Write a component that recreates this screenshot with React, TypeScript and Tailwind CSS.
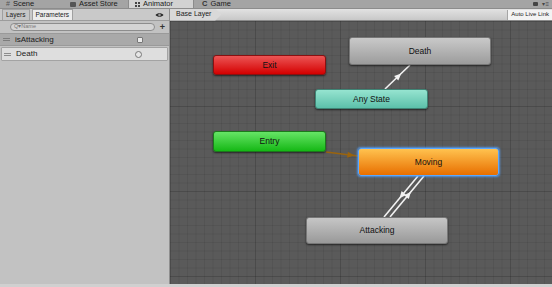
import React from "react";

type Pt = [number, number];

interface NodeProps {
  label: string;
  left: number;
  top: number;
  w: number;
  h: number;
  tone: string;
}

function GraphNode({ label, left, top, w, h, tone }: NodeProps) {
  return (
    <div
      className={`absolute flex items-center justify-center rounded-[3px] text-[8.5px] text-[#111] ${tone}`}
      style={{ left, top, width: w, height: h }}
    >
      {label}
    </div>
  );
}

// triangle pointing from a to b, centred at fraction t along the segment
function head(a: Pt, b: Pt, t: number, len = 7, half = 3) {
  const dx = b[0] - a[0];
  const dy = b[1] - a[1];
  const d = Math.hypot(dx, dy);
  const ux = dx / d;
  const uy = dy / d;
  const cx = a[0] + dx * t;
  const cy = a[1] + dy * t;
  const tip: Pt = [cx + (ux * len) / 2, cy + (uy * len) / 2];
  const bx = cx - (ux * len) / 2;
  const by = cy - (uy * len) / 2;
  const p1: Pt = [bx - uy * half, by + ux * half];
  const p2: Pt = [bx + uy * half, by - ux * half];
  return [tip, p1, p2].map((p) => p.join(",")).join(" ");
}

const transitions: { a: Pt; b: Pt; t: number; color: string }[] = [
  { a: [215, 68], b: [240, 44], t: 0.55, color: "#f2f2f2" },
  { a: [156, 131], b: [188, 135], t: 0.78, color: "#9a640e" },
  { a: [248, 155], b: [214, 196], t: 0.48, color: "#f2f2f2" },
  { a: [220, 196], b: [254, 155], t: 0.55, color: "#f2f2f2" },
];

function Eye() {
  return (
    <svg width="9" height="6" viewBox="0 0 9 6">
      <path d="M0.5 3C2 0.6 7 0.6 8.5 3C7 5.4 2 5.4 0.5 3Z" fill="#2a2a2a" />
      <circle cx="4.5" cy="3" r="1.3" fill="#9a9a9a" />
    </svg>
  );
}

export default function App() {
  return (
    <div className="w-[552px] h-[287px] flex flex-col overflow-hidden bg-[#c9c9c9] font-['Liberation_Sans',Arial,sans-serif] text-[#1b1b1b]">
      {/* window tabs */}
      <div className="h-[9px] flex items-stretch overflow-hidden bg-[#a4a4a4] border-b border-[#8c8c8c] text-[7.5px] leading-[8px]">
        <div className="flex items-center gap-[3px] w-[66px] pl-[6px]">
          <span className="text-[#555] text-[7px]">#</span>Scene
        </div>
        <div className="flex items-center gap-[3px] w-[62px] pl-[4px]">
          <span className="w-[6px] h-[5px] bg-[#555] rounded-[1px]" />Asset Store
        </div>
        <div className="flex items-center gap-[3px] w-[66px] pl-[6px] bg-[#d2d2d2] border-x border-[#8c8c8c]">
          <span className="grid grid-cols-2 gap-[1px]">
            <span className="w-[2px] h-[2px] bg-[#444]" />
            <span className="w-[2px] h-[2px] bg-[#444]" />
            <span className="w-[2px] h-[2px] bg-[#444]" />
            <span className="w-[2px] h-[2px] bg-[#444]" />
          </span>
          Animator
        </div>
        <div className="flex items-center gap-[3px] pl-[8px]">
          <span className="text-[#333] font-bold">C</span>Game
        </div>
        <div className="ml-auto flex items-center gap-[4px] pr-[3px]">
          <span className="w-[5px] h-[4px] bg-[#444] rounded-[1px]" />
          <span className="text-[6px] text-[#444] leading-none">▾≡</span>
        </div>
      </div>

      <div className="flex h-[275px]">
        {/* left panel */}
        <div className="w-[170px] flex flex-col bg-[#c2c2c2] border-r border-[#8f8f8f]">
          <div className="h-[12px] flex items-end bg-[#c9c9c9] border-b border-[#9c9c9c] pl-[2px] pr-[5px] text-[6.5px]">
            <div className="h-[11px] px-[3px] flex items-center border border-b-0 border-[#a0a0a0] bg-[#c6c6c6]">
              Layers
            </div>
            <div className="h-[11px] ml-[2px] px-[3px] flex items-center border border-b-0 border-[#a0a0a0] bg-[#ececec]">
              Parameters
            </div>
            <div className="ml-auto self-center">
              <Eye />
            </div>
          </div>
          <div className="h-[12px] flex items-center pl-[10px] pr-[4px]">
            <div className="flex-1 h-[8px] rounded-full border border-[#8d8d8d] bg-[#d4d4d4] flex items-center pl-[3px] text-[5.5px] text-[#777] leading-none">
              Q▾Name
            </div>
            <span className="ml-[5px] text-[9px] font-bold leading-none text-[#333]">+</span>
          </div>
          <div className="h-[13px] flex items-center bg-[#a9a9a9] border-y border-[#9a9a9a] pl-[3px] pr-[26px] text-[8px]">
            <span className="w-[7px] flex flex-col gap-[1px] mr-[5px]">
              <span className="h-px bg-[#7c7c7c]" />
              <span className="h-px bg-[#7c7c7c]" />
            </span>
            isAttacking
            <span className="ml-auto w-[6px] h-[6px] rounded-[1px] border border-[#777] bg-[#eaeaea]" />
          </div>
          <div className="h-[14px] mt-[1px] mx-[1px] flex items-center bg-[#dedede] border border-[#a3a3a3] rounded-[1px] pl-[2px] pr-[25px] text-[8px] text-[#1b1b1b]">
            <span className="w-[7px] flex flex-col gap-[1px] mr-[5px]">
              <span className="h-px bg-[#8c8c8c]" />
              <span className="h-px bg-[#8c8c8c]" />
            </span>
            Death
            <span className="ml-auto w-[7px] h-[7px] rounded-full border border-[#777] bg-[#e6e6e6]" />
          </div>
        </div>

        {/* graph column */}
        <div className="flex-1 flex flex-col">
          <div className="h-[12px] flex items-center bg-[linear-gradient(#e2e2e2,#c8c8c8)] border-b border-[#8a8a8a]">
            <div className="h-[12px] pl-[6px] pr-[10px] flex items-center text-[7px] bg-[#d9d9d9] [clip-path:polygon(0_0,88%_0,100%_50%,88%_100%,0_100%)]">
              Base Layer
            </div>
            <div className="ml-auto h-[10px] px-[3px] flex items-center text-[6px] bg-[#f3f3f3] border-l border-[#a5a5a5]">
              Auto Live Link
            </div>
          </div>
          <div className="relative flex-1 bg-[#5a5a5a] bg-[linear-gradient(to_right,rgba(0,0,0,0.1)_1px,transparent_1px),linear-gradient(to_bottom,rgba(0,0,0,0.1)_1px,transparent_1px),linear-gradient(to_right,rgba(0,0,0,0.07)_1px,transparent_1px),linear-gradient(to_bottom,rgba(0,0,0,0.07)_1px,transparent_1px)] bg-[size:85px_85px,85px_85px,8.5px_8.5px,8.5px_8.5px]">
            <svg className="absolute inset-0" width="381" height="263">
              {transitions.map((tr, i) => (
                <g key={i}>
                  <line
                    x1={tr.a[0]}
                    y1={tr.a[1]}
                    x2={tr.b[0]}
                    y2={tr.b[1]}
                    stroke={tr.color}
                    strokeWidth="1.6"
                  />
                  <polygon points={head(tr.a, tr.b, tr.t)} fill={tr.color} />
                </g>
              ))}
            </svg>
            <GraphNode label="Death" left={179} top={16} w={142} h={28} tone="bg-[linear-gradient(#c9c9c9,#9c9c9c)] border border-[#777] shadow-[0_1px_2px_rgba(0,0,0,0.6)]" />
            <GraphNode label="Exit" left={43} top={34} w={113} h={20} tone="bg-[linear-gradient(#ec5555,#d40000)] border border-[#8a1010] shadow-[0_1px_2px_rgba(0,0,0,0.6)]" />
            <GraphNode label="Any State" left={145} top={68} w={113} h={20} tone="bg-[linear-gradient(#96e4d0,#5cc0aa)] border border-[#3f8576] shadow-[0_1px_2px_rgba(0,0,0,0.6)]" />
            <GraphNode label="Entry" left={43} top={110} w={113} h={21} tone="bg-[linear-gradient(#66e466,#15b815)] border border-[#1b7a1b] shadow-[0_1px_2px_rgba(0,0,0,0.6)]" />
            <GraphNode label="Moving" left={188} top={127} w={141} h={28} tone="bg-[linear-gradient(#ffc24f,#e86f00)] border border-[#5aa8ff] shadow-[0_0_2px_1px_rgba(80,160,255,0.8)]" />
            <GraphNode label="Attacking" left={136} top={196} w={142} h={27} tone="bg-[linear-gradient(#c6c6c6,#999)] border border-[#777] shadow-[0_1px_2px_rgba(0,0,0,0.6)]" />
          </div>
        </div>
      </div>
      <div className="h-[3px] bg-[#d0d0d0]" />
    </div>
  );
}
